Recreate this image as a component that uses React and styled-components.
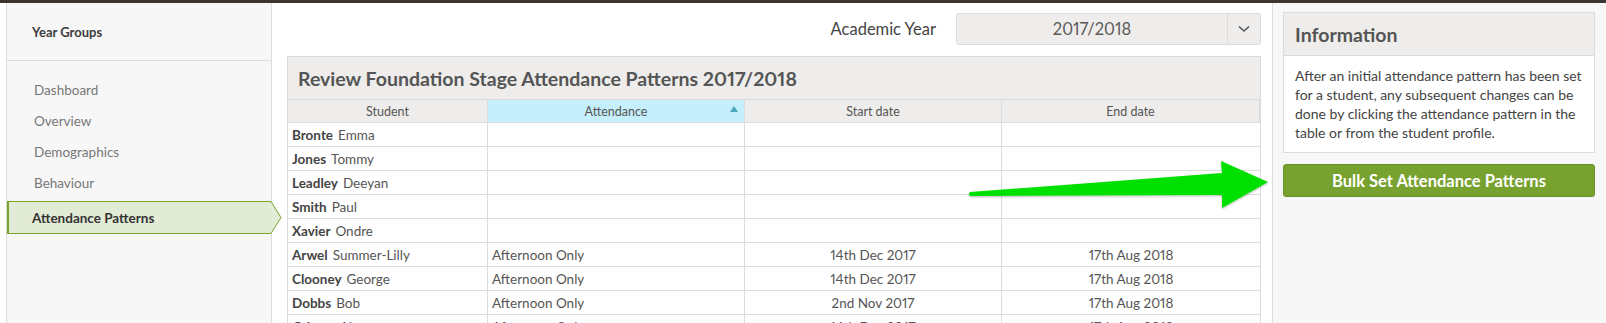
import React from 'react';
import styled, { createGlobalStyle } from 'styled-components';

const GlobalStyle = createGlobalStyle`
  html, body {
    margin: 0;
    height: 100%;
    overflow: hidden;
    background: #fff;
  }
  body {
    font-family: Lato, "Noto Sans", sans-serif;
    color: #555;
    font-variant-numeric: proportional-nums;
  }
  #root {
    height: 100%;
  }
`;

const students = [
  { last: 'Bronte', first: 'Emma' },
  { last: 'Jones', first: 'Tommy' },
  { last: 'Leadley', first: 'Deeyan' },
  { last: 'Smith', first: 'Paul' },
  { last: 'Xavier', first: 'Ondre' },
  { last: 'Arwel', first: 'Summer-Lilly', pattern: 'Afternoon Only', start: '14th Dec 2017', end: '17th Aug 2018' },
  { last: 'Clooney', first: 'George', pattern: 'Afternoon Only', start: '14th Dec 2017', end: '17th Aug 2018' },
  { last: 'Dobbs', first: 'Bob', pattern: 'Afternoon Only', start: '2nd Nov 2017', end: '17th Aug 2018' },
  { last: 'Grimes', first: 'Alex', pattern: 'Afternoon Only', start: '14th Dec 2017', end: '17th Aug 2018' },
];

const menu = ['Dashboard', 'Overview', 'Demographics', 'Behaviour', 'Attendance Patterns'];

const Page = styled.div`
  position: relative;
  height: 100%;
  display: flex;
  flex-direction: column;
`;

const TopBar = styled.div`
  height: 3px;
  background: #3a3531;
  flex: none;
`;

const Layout = styled.div`
  flex: 1;
  display: flex;
  padding-left: 6px;
  min-height: 0;
`;

const Sidebar = styled.nav`
  width: 264px;
  flex: none;
  background: #f7f7f7;
  border-left: 1px solid #dcdcdc;
  border-right: 1px solid #dcdcdc;
`;

const SideHeader = styled.div`
  height: 57px;
  border-bottom: 1px solid #dcdcdc;
  display: flex;
  align-items: center;
  padding-left: 25px;
  font-size: 13px;
  font-weight: 700;
  color: #3d3d3d;
`;

const MenuList = styled.ul`
  list-style: none;
  margin: 0;
  padding: 13px 0 0;
`;

const MenuItem = styled.li`
  position: relative;
  height: ${p => (p.$active ? '31px' : '29px')};
  display: flex;
  align-items: center;
  padding-left: ${p => (p.$active ? '23px' : '25px')};
  font-size: 13.5px;
  font-weight: ${p => (p.$active ? 700 : 400)};
  color: ${p => (p.$active ? '#333' : '#777')};
  background: ${p => (p.$active ? '#e2ebd5' : 'transparent')};
  border-top: 1px solid ${p => (p.$active ? '#7aa32a' : 'transparent')};
  border-bottom: 1px solid ${p => (p.$active ? '#7aa32a' : 'transparent')};
  border-left: 2px solid ${p => (p.$active ? '#7aa32a' : 'transparent')};
  margin-top: ${p => (p.$active ? '3px' : '0')};
`;

const Tip = styled.svg`
  position: absolute;
  right: -11px;
  top: -1px;
  width: 12px;
  height: 33px;
`;

const Main = styled.main`
  flex: 1;
  padding: 10px 11px 0 15px;
  display: flex;
  flex-direction: column;
  min-width: 0;
`;

const YearRow = styled.div`
  display: flex;
  justify-content: flex-end;
  align-items: center;
  gap: 20px;
  height: 32px;
  margin-bottom: 11px;
`;

const YearLabel = styled.span`
  font-size: 16.5px;
  color: #444;
`;

const Select = styled.div`
  width: 303px;
  height: 30px;
  display: flex;
  background: #eeedeb;
  border: 1px solid #dedcda;
  border-radius: 3px;
`;

const SelectValue = styled.div`
  flex: 1;
  display: flex;
  align-items: center;
  justify-content: center;
  font-size: 16.5px;
  color: #5a5a5a;
`;

const SelectToggle = styled.div`
  width: 32px;
  border-left: 1px solid #dedcda;
  display: flex;
  align-items: center;
  justify-content: center;
  color: #555;
`;

const Table = styled.div`
  border: 1px solid #dcdcdc;
  border-bottom: none;
`;

const TableTitle = styled.h2`
  margin: 0;
  height: 42px;
  display: flex;
  align-items: center;
  padding-left: 10px;
  background: #eeedeb;
  border-bottom: 1px solid #dcdcdc;
  font-size: 19.5px;
  font-weight: 700;
  color: #555;
`;

const Grid = styled.div`
  display: grid;
  grid-template-columns: 200px 257px 257px 1fr;
`;

const HeadCell = styled.div`
  position: relative;
  height: 22px;
  display: flex;
  align-items: center;
  justify-content: center;
  font-size: 12.5px;
  color: #555;
  background: ${p => (p.$sorted ? '#c5effb' : '#eeedeb')};
  border-right: 1px solid #dcdcdc;
  border-bottom: 1px solid #dcdcdc;
  &:last-child {
    border-right: none;
  }
`;

const SortMark = styled.span`
  position: absolute;
  right: 6px;
  top: 6px;
  width: 0;
  height: 0;
  border-left: 4px solid transparent;
  border-right: 4px solid transparent;
  border-bottom: 6px solid #4aa7bb;
`;

const Cell = styled.div`
  height: 23px;
  display: flex;
  align-items: center;
  justify-content: ${p => (p.$center ? 'center' : 'flex-start')};
  padding-left: ${p => (p.$center ? '0' : '4px')};
  font-size: 13.5px;
  color: #555;
  border-right: 1px solid #dcdcdc;
  border-bottom: 1px solid #dcdcdc;
  white-space: nowrap;
  &:nth-child(4n) {
    border-right: none;
  }
`;

const Surname = styled.b`
  color: #444;
  margin-right: 5px;
`;

const Aside = styled.aside`
  width: 312px;
  flex: none;
  background: #f7f7f7;
  border-left: 1px solid #dcdcdc;
  padding: 9px 11px 0 10px;
`;

const InfoBox = styled.section`
  border: 1px solid #dcdcdc;
  background: #fff;
`;

const InfoTitle = styled.h3`
  margin: 0;
  height: 42px;
  display: flex;
  align-items: center;
  padding-left: 11px;
  background: #eeedeb;
  border-bottom: 1px solid #dcdcdc;
  font-size: 19.5px;
  font-weight: 700;
  color: #555;
`;

const InfoText = styled.p`
  margin: 0;
  padding: 10px 11px 10px;
  font-size: 14px;
  line-height: 19px;
  color: #444;
`;

const BulkButton = styled.button`
  display: block;
  width: 100%;
  height: 33px;
  margin-top: 11px;
  background: #78a22f;
  border: 1px solid #6a9128;
  border-radius: 3px;
  color: #fff;
  font-family: inherit;
  font-size: 16.5px;
  font-weight: 700;
`;

const Pointer = styled.svg`
  position: absolute;
  left: 960px;
  top: 150px;
  width: 320px;
  height: 70px;
  pointer-events: none;
`;

export default function App() {
  return (
    <Page>
      <GlobalStyle />
      <TopBar />
      <Layout>
        <Sidebar>
          <SideHeader>Year Groups</SideHeader>
          <MenuList>
            {menu.map(item => {
              const active = item === 'Attendance Patterns';
              return (
                <MenuItem key={item} $active={active}>
                  {item}
                  {active && (
                    <Tip viewBox="0 0 12 33">
                      <polygon points="0,0.5 1,0.5 11,16.5 1,32.5 0,32.5" fill="#e2ebd5" stroke="none" />
                      <polyline points="0,0.5 1,0.5 11,16.5 1,32.5 0,32.5" fill="none" stroke="#7aa32a" strokeWidth="1" />
                    </Tip>
                  )}
                </MenuItem>
              );
            })}
          </MenuList>
        </Sidebar>

        <Main>
          <YearRow>
            <YearLabel>Academic Year</YearLabel>
            <Select>
              <SelectValue>2017/2018</SelectValue>
              <SelectToggle>
                <svg width="12" height="8" viewBox="0 0 12 8">
                  <polyline points="1,1.5 6,6 11,1.5" fill="none" stroke="#555" strokeWidth="1.6" />
                </svg>
              </SelectToggle>
            </Select>
          </YearRow>

          <Table>
            <TableTitle>Review Foundation Stage Attendance Patterns 2017/2018</TableTitle>
            <Grid>
              <HeadCell>Student</HeadCell>
              <HeadCell $sorted>
                Attendance
                <SortMark />
              </HeadCell>
              <HeadCell>Start date</HeadCell>
              <HeadCell>End date</HeadCell>
              {students.map(s => (
                <React.Fragment key={s.last}>
                  <Cell>
                    <Surname>{s.last}</Surname>
                    {s.first}
                  </Cell>
                  <Cell>{s.pattern}</Cell>
                  <Cell $center>{s.start}</Cell>
                  <Cell $center>{s.end}</Cell>
                </React.Fragment>
              ))}
            </Grid>
          </Table>
        </Main>

        <Aside>
          <InfoBox>
            <InfoTitle>Information</InfoTitle>
            <InfoText>
              After an initial attendance pattern has been set for a student, any subsequent changes can be
              done by clicking the attendance pattern in the table or from the student profile.
            </InfoText>
          </InfoBox>
          <BulkButton>Bulk Set Attendance Patterns</BulkButton>
        </Aside>
      </Layout>

      <Pointer viewBox="0 0 320 70">
        <defs>
          <filter id="shade" x="-5%" y="-20%" width="110%" height="140%">
            <feDropShadow dx="0" dy="1" stdDeviation="1.2" floodColor="#000" floodOpacity="0.3" />
          </filter>
        </defs>
        <path
          d="M10,42 L262,23 L261,11 L308,32 L262,58 L262,45 L10,46 Q8,44 10,42 Z"
          fill="#00e000"
          filter="url(#shade)"
        />
      </Pointer>
    </Page>
  );
}
